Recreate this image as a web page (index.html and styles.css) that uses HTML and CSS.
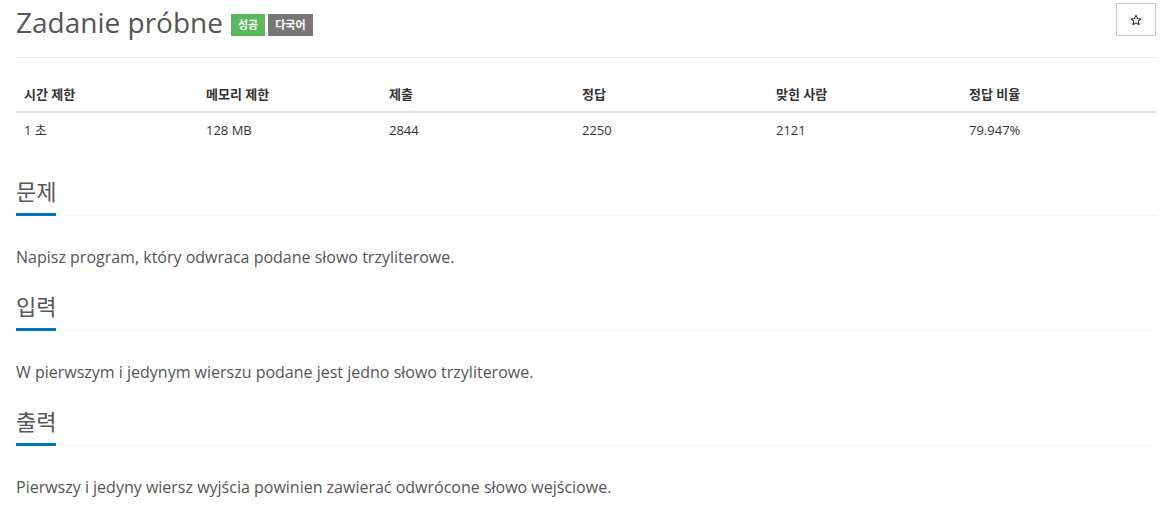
FILE: index.html
```html
<!DOCTYPE html>
<html lang="ko">
<head>
<meta charset="utf-8">
<link rel="stylesheet" href="styles.css">
</head>
<body>
<div class="page">
  <div class="page-header">
    <h1 class="title">Zadanie próbne <span class="badge green">성공</span><span class="badge gray">다국어</span></h1>
    <button class="star" aria-label="star">
      <svg width="12" height="12" viewBox="0 0 24 24"><path d="M12 2.5l2.8 6.6 7.1.6-5.4 4.7 1.6 7-6.1-3.7-6.1 3.7 1.6-7-5.4-4.7 7.1-.6z" fill="none" stroke="#333" stroke-width="2.2" stroke-linejoin="round"/></svg>
    </button>
  </div>
  <table class="info">
    <thead>
      <tr><th class="c1">시간 제한</th><th class="c2">메모리 제한</th><th class="c3">제출</th><th class="c4">정답</th><th class="c5">맞힌 사람</th><th>정답 비율</th></tr>
    </thead>
    <tbody>
      <tr><td>1 초</td><td>128 MB</td><td>2844</td><td>2250</td><td>2121</td><td>79.947%</td></tr>
    </tbody>
  </table>
  <section class="sec">
    <div class="headline"><h2>문제</h2></div>
    <p class="text">Napisz program, który odwraca podane słowo trzyliterowe.</p>
  </section>
  <section class="sec">
    <div class="headline"><h2>입력</h2></div>
    <p class="text">W pierwszym i jedynym wierszu podane jest jedno słowo trzyliterowe.</p>
  </section>
  <section class="sec">
    <div class="headline"><h2>출력</h2></div>
    <p class="text">Pierwszy i jedyny wiersz wyjścia powinien zawierać odwrócone słowo wejściowe.</p>
  </section>
</div>
</body>
</html>
```
FILE: styles.css
```css
* { box-sizing: border-box; }
body {
  margin: 0;
  background: #fff;
  font-family: "Open Sans", "Noto Sans CJK KR", sans-serif;
  color: #333;
}
.page { padding: 0 9px 0 16px; }
.page-header {
  display: flex;
  justify-content: space-between;
  align-items: flex-start;
  border-bottom: 1px solid #eee;
  padding-top: 3px;
  height: 58px;
}
.title {
  margin: 0;
  font-size: 28px;
  font-weight: 400;
  color: #555;
  line-height: 38px;
  display: flex;
  align-items: center;
}
.badge {
  display: inline-block;
  font-size: 11px;
  font-weight: 700;
  color: #fff;
  line-height: 22px;
  padding: 0 7px;
  margin-top: 5px;
}
.badge.green { background: #5cb85c; margin-left: 8px; }
.badge.gray { background: #777; margin-left: 3px; }
.star {
  width: 40px;
  height: 33px;
  background: #fff;
  border: 1px solid #ccc;
  border-radius: 0;
  display: flex;
  align-items: center;
  justify-content: center;
  padding: 0;
}
.info {
  width: 100%;
  border-collapse: collapse;
  margin-top: 18px;
  margin-bottom: 28px;
  font-size: 13px;
  color: #333;
}
.info th, .info td {
  text-align: left;
  padding: 8px;
  line-height: 20px;
}
.info th { font-weight: 700; border-bottom: 2px solid #ddd; padding-top: 8px; padding-bottom: 7px; }
.info td { padding-top: 7px; }
.c1 { width: 182px; }
.c2 { width: 183px; }
.c3 { width: 193px; }
.c4 { width: 194px; }
.c5 { width: 193px; }
.sec { margin-top: 19px; }
.headline {
  border-bottom: 1px dotted #e4e9f0;
  height: 40px;
}
.headline h2 {
  margin: 0;
  display: inline-block;
  white-space: nowrap;
  font-size: 22px;
  font-weight: 400;
  color: #555;
  line-height: 30px;
  padding-bottom: 7px;
  border-bottom: 3px solid #0076c0;
  width: 40px;
}
.text {
  margin: 26px 0 0;
  font-size: 16px;
  line-height: 30px;
  color: #555;
}
```
